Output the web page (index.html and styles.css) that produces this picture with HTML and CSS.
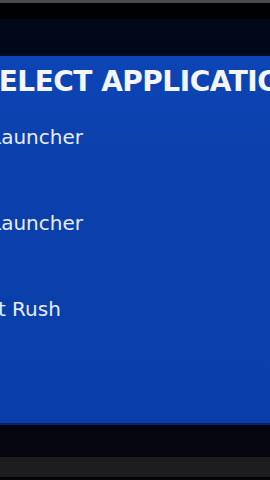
FILE: index.html
```html
<!DOCTYPE html>
<html lang="en">
<head>
  <meta charset="UTF-8">
  <meta name="viewport" content="width=device-width, initial-scale=1.0">
  <title>Select Application</title>
  <link rel="stylesheet" href="styles.css">
</head>
<body>
  <div class="bezel-top"></div>
  <div class="gap-black"></div>
  <div class="gap-navy"></div>
  <div id="panel">
    <h1 class="title">SELECT APPLICATION</h1>
    <ul class="apps">
      <li class="app">Launcher</li>
      <li class="app">Launcher</li>
      <li class="app">Dart Rush</li>
    </ul>
  </div>
  <div class="gap-bottom"></div>
  <div class="bezel-bottom"></div>
</body>
</html>
```

FILE: styles.css
```css
html, body {
  margin: 0;
  height: 100%;
  background: #020207;
  overflow: hidden;
}
body {
  display: flex;
  flex-direction: column;
  font-family: "DejaVu Sans", "Open Sans", sans-serif;
}
.bezel-top {
  height: 3px;
  background: #4a4a4c;
}
.gap-black {
  height: 16px;
  background: #010104;
}
.gap-navy {
  height: 35px;
  background: #03071a;
  border-bottom: 2px solid #020a30;
}
#panel {
  height: 367px;
  background: linear-gradient(180deg, #0d45b6 0%, #0b3fab 30%, #0a3ea8 100%);
  border-bottom: 2px solid #061e66;
  overflow: hidden;
  color: #f4f6ff;
}
.title {
  margin: 9px 0 0 -21px;
  font-size: 28px;
  font-weight: 700;
  letter-spacing: -0.5px;
  white-space: nowrap;
  line-height: 34px;
}
.apps {
  list-style: none;
  margin: 26px 0 0;
  padding: 0;
}
.app {
  margin-left: -10px;
  height: 86px;
  font-size: 20px;
  line-height: 24px;
  white-space: nowrap;
  color: #e8ecff;
}
.app:last-child {
  margin-left: -38px;
}
.gap-bottom {
  height: 32px;
  background: #05050f;
}
.bezel-bottom {
  height: 20px;
  background: #1d1d1f;
  border-bottom: 3px solid #050507;
}
```
